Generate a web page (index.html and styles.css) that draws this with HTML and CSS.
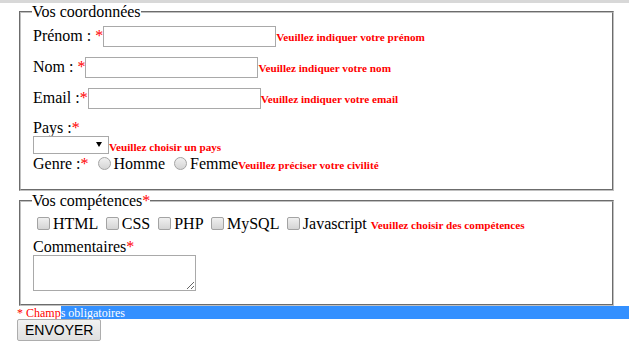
FILE: index.html
```html
<!DOCTYPE html>
<html lang="fr">
<head>
  <meta charset="UTF-8">
  <title>Formulaire de contact</title>
  <link rel="stylesheet" href="styles.css">
</head>
<body>
  <div class="topbar"></div>
  <form id="contactForm" class="page">
    <fieldset class="box box-info">
      <legend>Vos coordonnées</legend>
      <div class="row"><label for="prenom">Prénom : <span class="req">*</span></label><input type="text" id="prenom" class="field"><span class="error">Veuillez indiquer votre prénom</span></div>
      <div class="row"><label for="nom">Nom : <span class="req">*</span></label><input type="text" id="nom" class="field"><span class="error">Veuillez indiquer votre nom</span></div>
      <div class="row"><label for="email">Email :<span class="req">*</span></label><input type="text" id="email" class="field"><span class="error">Veuillez indiquer votre email</span></div>
      <div class="line"><label for="pays">Pays :<span class="req">*</span></label></div>
      <div class="line"><span class="select-wrap"><select id="pays" class="select"></select></span><span class="error">Veuillez choisir un pays</span></div>
      <div class="line">Genre :<span class="req">*</span> <input type="radio" name="genre" id="homme" class="radio"><label for="homme">Homme</label> <input type="radio" name="genre" id="femme" class="radio"><label for="femme">Femme</label><span class="error">Veuillez préciser votre civilité</span></div>
    </fieldset>
    <fieldset class="box box-skills">
      <legend>Vos compétences<span class="req">*</span></legend>
      <div class="checks">
        <input type="checkbox" id="html" class="check"><label for="html">HTML</label>
        <input type="checkbox" id="css" class="check"><label for="css">CSS</label>
        <input type="checkbox" id="php" class="check"><label for="php">PHP</label>
        <input type="checkbox" id="mysql" class="check"><label for="mysql">MySQL</label>
        <input type="checkbox" id="js" class="check"><label for="js">Javascript</label>
        <span class="error">Veuillez choisir des compétences</span>
      </div>
      <label for="comment" class="comment-label">Commentaires<span class="req">*</span></label>
      <textarea id="comment" class="comment"></textarea>
    </fieldset>
    <p class="mandatory">* Champ<span class="selected">s obligatoires</span></p>
    <button type="submit" class="send">ENVOYER</button>
  </form>
</body>
</html>
```

FILE: styles.css
```css
body {
  margin: 0;
  font-family: "Liberation Serif", "Times New Roman", serif;
  font-size: 16px;
  color: #000;
}
.topbar {
  height: 3px;
  background: #d8d8d8;
}
.page {
  margin: 0;
  padding-left: 17px;
}
.box {
  margin: 0 15px 0 2px;
  padding: 5px 12px 10px;
  border: 2px groove #c0c0c0;
  min-width: 0;
}
.box legend {
  padding: 0;
  margin-left: -1px;
}
.box-info {
  padding-bottom: 16px;
}
.box-skills {
  margin-top: 1px;
  padding-bottom: 13px;
}
.row {
  margin-bottom: 10px;
}
.line {
  height: 18px;
}
.req {
  color: #ff0000;
}
.error {
  color: #ff0000;
  font-family: "Liberation Serif", "Times New Roman", serif;
  font-weight: bold;
  font-size: 11.2px;
}
.field {
  width: 173px;
  height: 21px;
  box-sizing: border-box;
  margin: 0;
  padding: 1px 2px;
  border: 1px solid #a9a9a9;
  font: 13.33px Arial, "Liberation Sans", sans-serif;
}
.select-wrap {
  position: relative;
  display: inline-block;
  vertical-align: top;
  margin-top: -1px;
}
.select-wrap::after {
  content: "";
  position: absolute;
  right: 7px;
  top: 6px;
  border-left: 3px solid transparent;
  border-right: 3px solid transparent;
  border-top: 5px solid #000;
}
.select {
  appearance: none;
  display: block;
  width: 76px;
  height: 18px;
  margin: 0;
  border: 1px solid #a9a9a9;
  border-radius: 0;
  background: #fff;
}
.radio, .check {
  appearance: none;
  box-sizing: border-box;
  width: 13px;
  height: 13px;
  border: 1px solid #a3a3a3;
  background: linear-gradient(#f0f0f0, #d4d4d4);
}
.radio {
  border-radius: 50%;
  margin: 0 3px 0 5px;
  vertical-align: -1px;
}
.check {
  border-radius: 2px;
  margin: 0 3px 0 4px;
  vertical-align: -1px;
}
.checks {
  margin-bottom: 5px;
}
.comment-label {
  display: block;
}
.comment {
  display: block;
  box-sizing: border-box;
  width: 163px;
  height: 36px;
  margin: -1px 0 0 0;
  border: 1px solid #a9a9a9;
}
.mandatory {
  display: flex;
  margin: 0;
  font-size: 12px;
  line-height: 12px;
  padding-top: 1px;
  color: #ff0000;
}
.selected {
  flex: 1;
  margin-top: -1px;
  padding-top: 1px;
  background: #3390ff;
  color: #fff;
}
.send {
  height: 22px;
  padding: 0 7px;
  margin: 0;
  font: 14px "Liberation Sans", Arial, sans-serif;
  color: #000;
  border: 1px solid #adadad;
  border-radius: 2px;
  background: linear-gradient(#f2f2f2, #e0e0e0);
}
```
